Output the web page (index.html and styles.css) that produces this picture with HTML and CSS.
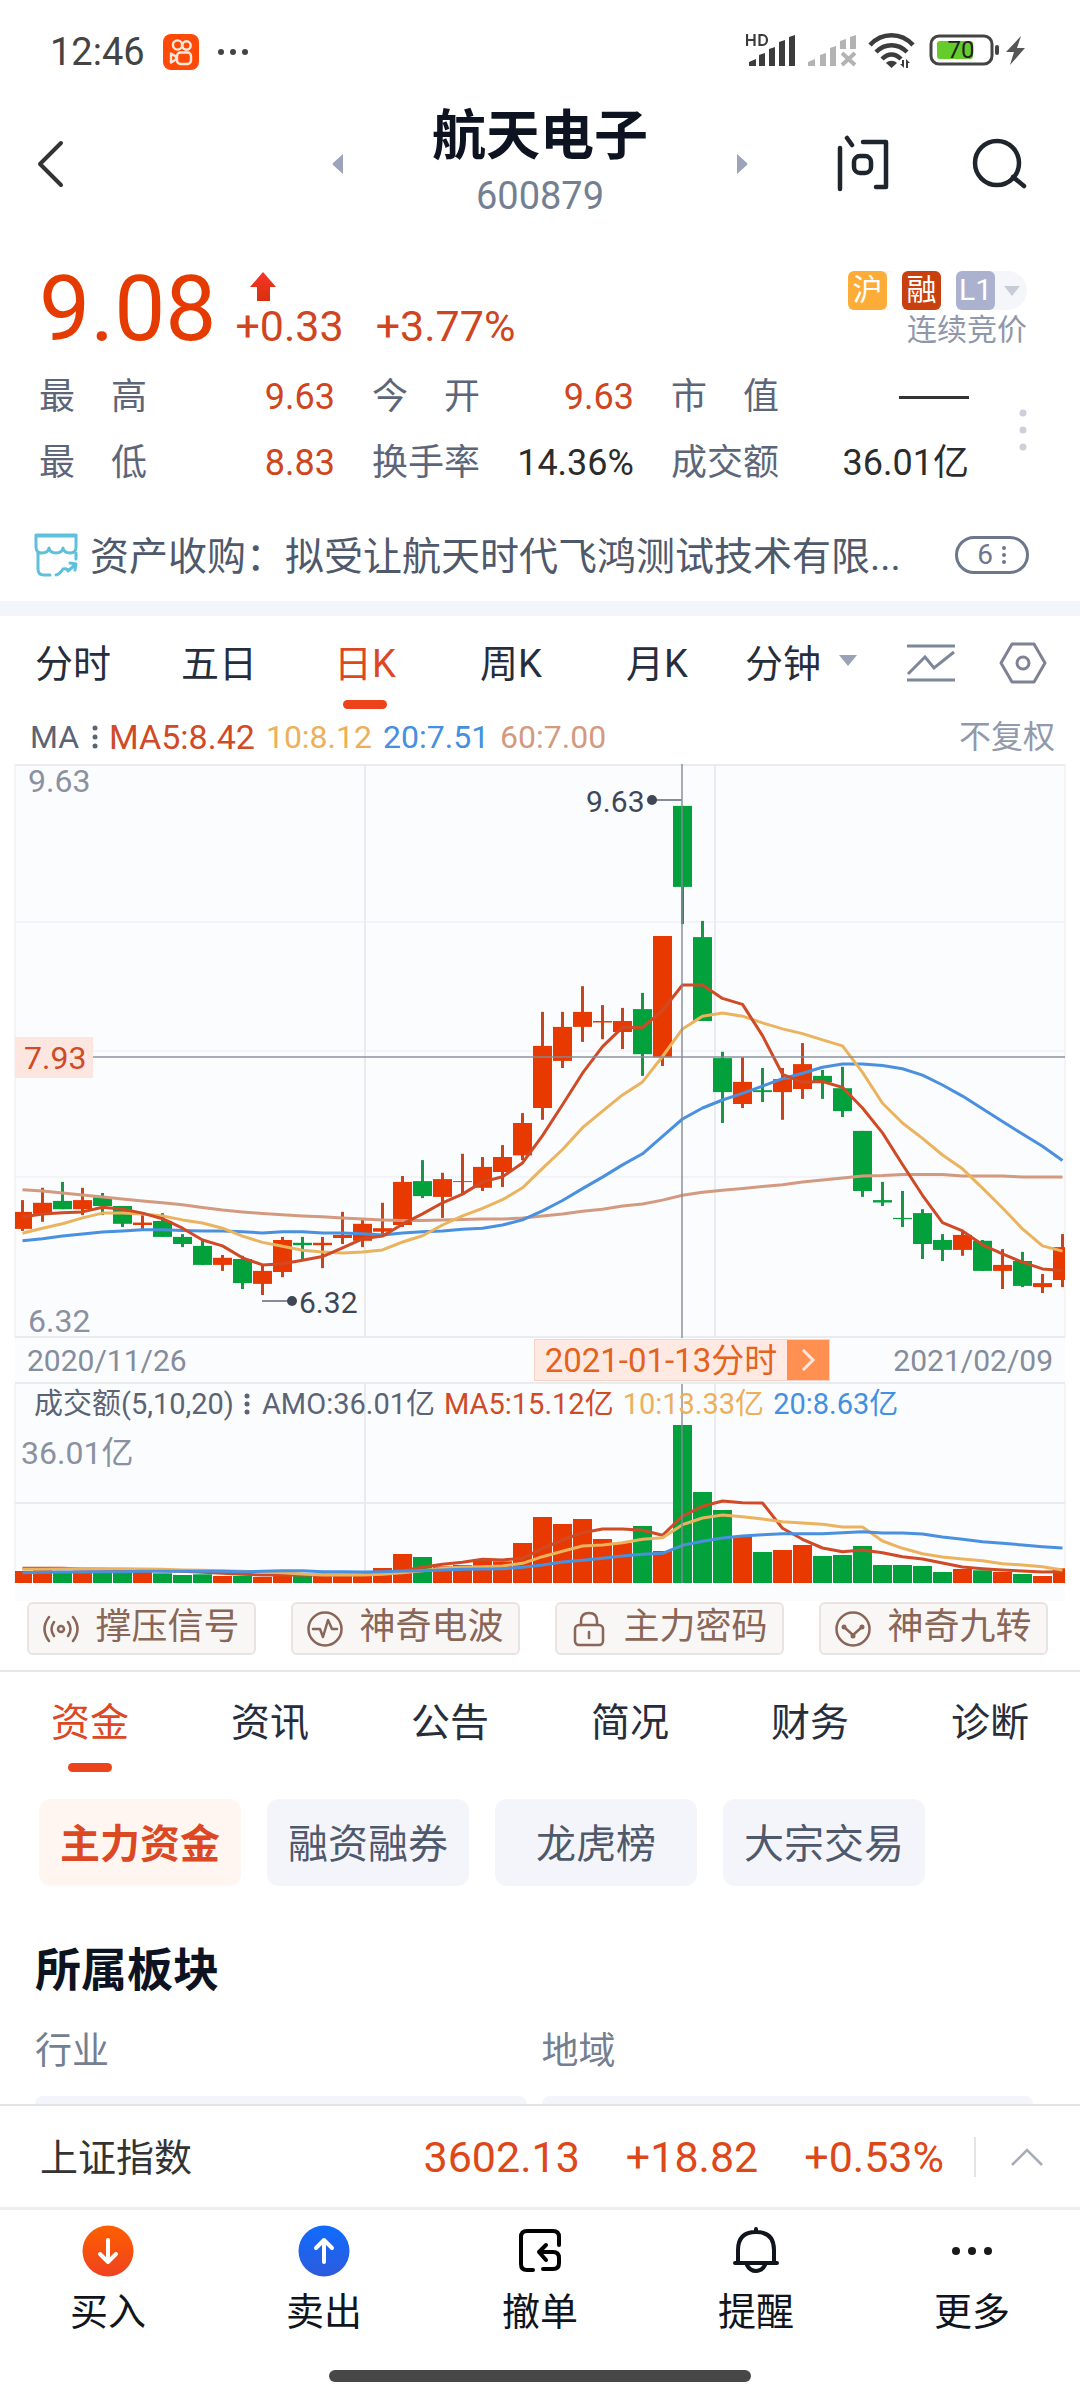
FILE: index.html
```html
<!DOCTYPE html>
<html lang="zh-CN">
<head>
<meta charset="utf-8">
<meta name="viewport" content="width=device-width, initial-scale=1">
<title>航天电子 600879</title>
<link rel="stylesheet" href="styles.css">
</head>
<body>
<div class="app">
  <div class="status">
    <span class="clock">12:46</span>
    <svg class="ks" viewBox="0 0 36 36"><rect width="36" height="36" rx="8" fill="#ff4906"/><g fill="none" stroke="#ffe9dc" stroke-width="2.4"><circle cx="14.500" cy="11" r="4.600"/><circle cx="23.500" cy="11.500" r="4.200"/><rect x="14" y="18.500" width="14" height="11.500" rx="3.500"/><path d="M8 19.500v9l5-3v-3z" stroke-linejoin="round"/></g></svg>
    <svg class="more" viewBox="0 0 32 8" fill="#444"><circle cx="4" cy="4" r="3"/><circle cx="16" cy="4" r="3"/><circle cx="28" cy="4" r="3"/></svg>
    <svg class="system" viewBox="0 0 284 40">
      <g fill="none" stroke="#3c3c3c" stroke-width="2.200"><path d="M1 2v12M8.500 2v12M1 8h7.500M13.500 3v10h3c6 0 6-10 0-10z"/></g>
      <g fill="#3c3c3c"><path d="M3 34v-4l7-3v7zM13 34V23l6-2v13zM23 34V17l6-2v19zM33 34V10l6-2v26zM43 34V5l6-2v31z"/></g>
      <g fill="#b3b3b3"><path d="M62 34v-4l7-3v7zM74 34V23l6-2v13zM84 34V16l6-2v20zM94 17v-8l6-2v10zM104 17V5l6-2v14z"/><path d="M96 21l13 12M109 21l-13 12" stroke="#b3b3b3" stroke-width="4"/></g>
      <g fill="none" stroke="#3c3c3c" stroke-width="4.500"><path d="M124 13c12-13 31-13 43 0M130 20c9-9 22-9 31 0M136 27c6-6 13-6 19 0"/></g>
      <path d="M140 31c3-3 8-3 11 0l-5.500 5zM156 28h2v8l-4-4h2zM160 36v-9l4 4h-2v5z" fill="#3c3c3c"/>
      <rect x="185" y="4" width="61" height="28" rx="8" fill="none" stroke="#444" stroke-width="3"/>
      <rect x="191" y="9" width="36" height="18" rx="3" fill="#64cc2b"/>
      <text x="215" y="26" text-anchor="middle" font-size="24" fill="#222">70</text>
      <rect x="249" y="13" width="4" height="10" rx="2" fill="#444"/>
      <path d="M275 4l-15 16h8l-4 13 15-17h-8z" fill="#555"/>
    </svg>
  </div>

  <header class="header">
    <button class="icon-btn back" aria-label="返回"><svg viewBox="0 0 28 48" width="28" height="48"><path d="M25 3L4 24l21 21" fill="none" stroke="#333" stroke-width="4" stroke-linecap="round" stroke-linejoin="round"/></svg></button>
    <div class="switcher">
      <button class="icon-btn" aria-label="上一只"><svg viewBox="0 0 12 20" width="12" height="20"><path d="M11 0v20L1 11q-1-1 0-2z" fill="#9ba4b8"/></svg></button>
      <div class="name"><h1>航天电子</h1><p>600879</p></div>
      <button class="icon-btn" aria-label="下一只"><svg viewBox="0 0 12 20" width="12" height="20"><path d="M1 0v20l10-9q1-1 0-2z" fill="#9ba4b8"/></svg></button>
    </div>
    <div class="tools">
      <button class="icon-btn" aria-label="问"><svg viewBox="0 0 54 58" width="54" height="58" fill="none" stroke="#1f252d" stroke-width="4.500" stroke-linecap="round" stroke-linejoin="round"><path d="M4 13v41M11 3l5 7M27 7h23v45H40"/><rect x="18" y="21" width="17" height="17" rx="6"/></svg></button>
      <button class="icon-btn" aria-label="搜索"><svg viewBox="0 0 56 52" width="56" height="52" fill="none" stroke="#1f252d" stroke-width="4.500" stroke-linecap="round"><circle cx="25" cy="25" r="22"/><path d="M41 39l11 9"/></svg></button>
    </div>
  </header>

  <main class="content">
    <section class="quote">
      <div class="quote-top">
        <strong class="price">9.08</strong>
        <div class="change">
          <svg viewBox="0 0 28 30" width="28" height="30"><defs><linearGradient id="up" x2="0" y2="1"><stop stop-color="#f7342b"/><stop offset="1" stop-color="#d8300c"/></linearGradient></defs><path d="M14 0L27 15h-6v14H8V15H1z" fill="url(#up)"/></svg>
          <p><span>+0.33</span><span>+3.77%</span></p>
        </div>
        <div class="marks">
          <button class="badges" aria-label="标签"><span class="badge hu">沪</span><span class="badge rong">融</span><span class="badge level">L1</span><svg viewBox="0 0 16 10" width="16" height="10"><path d="M0 0h16L8 10z" fill="#c8ccd6"/></svg></button>
          <span class="session">连续竞价</span>
        </div>
      </div>
      <div class="quote-grid">
        <dl>
          <div><dt>最 高</dt><dd class="red">9.63</dd></div>
          <div><dt>今 开</dt><dd class="red">9.63</dd></div>
          <div><dt>市 值</dt><dd><span class="dash"></span></dd></div>
          <div><dt>最 低</dt><dd class="red">8.83</dd></div>
          <div><dt>换手率</dt><dd>14.36%</dd></div>
          <div><dt>成交额</dt><dd>36.01亿</dd></div>
        </dl>
        <button class="icon-btn" aria-label="展开"><svg viewBox="0 0 8 42" width="8" height="42" fill="#ccd0db"><circle cx="4" cy="4" r="3.500"/><circle cx="4" cy="21" r="3.500"/><circle cx="4" cy="38" r="3.500"/></svg></button>
      </div>
    </section>

    <a class="notice" href="#">
      <svg viewBox="0 0 44 44" width="44" height="44" fill="none" stroke="#5fc0dc" stroke-width="3" stroke-linejoin="round" stroke-linecap="round"><path d="M2 2h40v12q0 6-6 6-6 0-7-5-1 5-7 5t-7-5q-1 5-7 5-6 0-6-6zM2 3h40M4 20v16q0 6 6 6h6M42 20v6M22 42q4-1 7-6 4-1 5 2l8-7M36 30l6 1-1 6"/></svg>
      <span class="notice-text">资产收购：拟受让航天时代飞鸿测试技术有限...</span>
      <span class="count">6<svg viewBox="0 0 6 20" width="6" height="20" fill="#6c778c"><circle cx="3" cy="3" r="2"/><circle cx="3" cy="10" r="2"/><circle cx="3" cy="17" r="2"/></svg></span>
    </a>

    <section class="kline">
      <nav class="periods">
        <button>分时</button><button>五日</button><button class="active">日K</button><button>周K</button><button>月K</button>
        <button class="minutes">分钟<svg viewBox="0 0 18 11" width="18" height="11"><path d="M0 0h18L9 11z" fill="#9aa2b5"/></svg></button>
        <button class="overlay" aria-label="叠加"><svg viewBox="0 0 50 40" width="50" height="40" fill="none" stroke="#7d879a" stroke-width="3"><path d="M1 3h48M1 37h48M2 31l17-17 9 11L48 9"/></svg></button>
        <button class="settings" aria-label="设置"><svg viewBox="0 0 48 42" width="48" height="42" fill="none" stroke="#7d8294" stroke-width="3" stroke-linejoin="round"><path d="M13 2h22l11 19-11 19H13L2 21z"/><circle cx="24" cy="21" r="6"/></svg></button>
      </nav>
      <div class="ma-row">
        <button class="ma-name">MA<svg viewBox="0 0 6 26" width="6" height="26" fill="#5b6475"><circle cx="3" cy="4" r="2.500"/><circle cx="3" cy="13" r="2.500"/><circle cx="3" cy="22" r="2.500"/></svg></button>
        <span class="c5">MA5:8.42</span><span class="c10">10:8.12</span><span class="c20">20:7.51</span><span class="c60">60:7.00</span>
        <button class="adjust">不复权</button>
      </div>
      <div class="panes">
        <svg id="price-pane" class="pane" viewBox="0 0 1050 574" role="img" aria-label="日K线"></svg>
        <div class="dates">
          <span>2020/11/26</span><span>2021/02/09</span>
          <button class="date-tip"><span>2021-01-13分时</span><i><svg viewBox="0 0 16 24" width="16" height="24"><path d="M3 2l10 10L3 22" fill="none" stroke="#ffe9dd" stroke-width="3"/></svg></i></button>
        </div>
        <div class="volume">
          <svg id="volume-pane" class="pane" viewBox="0 0 1050 217" role="img" aria-label="成交额"></svg>
          <div class="volume-legend">
            <button>成交额(5,10,20)<svg viewBox="0 0 6 22" width="6" height="22" fill="#5b6475"><circle cx="3" cy="3" r="2.500"/><circle cx="3" cy="11" r="2.500"/><circle cx="3" cy="19" r="2.500"/></svg></button>
            <span>AMO:36.01亿</span><span class="c5">MA5:15.12亿</span><span class="c10">10:13.33亿</span><span class="c20">20:8.63亿</span>
          </div>
        </div>
      </div>
      <div class="features">
        <button><svg viewBox="0 0 36 36" fill="none" stroke="#8a6657" stroke-width="2.500" stroke-linecap="round"><circle cx="18" cy="18" r="3"/><path d="M11 11q-5 7 0 14M25 11q5 7 0 14M6 6q-9 12 0 24M30 6q9 12 0 24"/></svg><span>撑压信号</span></button>
        <button><svg viewBox="0 0 36 36" fill="none" stroke="#8a6657" stroke-width="2.500" stroke-linejoin="round" stroke-linecap="round"><circle cx="18" cy="18" r="16.500"/><path d="M6 18h7l3 8 5-17 4 9h5"/></svg><span>神奇电波</span></button>
        <button><svg viewBox="0 0 36 36" fill="none" stroke="#8a6657" stroke-width="2.500" stroke-linecap="round"><rect x="4" y="14" width="28" height="20" rx="4"/><path d="M10 14v-4q0-8 8-8t8 8v4M18 21v6"/></svg><span>主力密码</span></button>
        <button><svg viewBox="0 0 36 36" fill="none" stroke="#8a6657" stroke-width="2.500" stroke-linecap="round"><circle cx="18" cy="18" r="16.500"/><path d="M9 16l9 8 9-8"/><g fill="#8a6657" stroke="none"><circle cx="9" cy="16" r="2.500"/><circle cx="18" cy="25" r="2.500"/><circle cx="27" cy="16" r="2.500"/></g></svg><span>神奇九转</span></button>
      </div>
    </section>

    <nav class="sections">
      <button class="active">资金</button><button>资讯</button><button>公告</button><button>简况</button><button>财务</button><button>诊断</button>
    </nav>
    <div class="chips">
      <button class="on">主力资金</button><button>融资融券</button><button>龙虎榜</button><button>大宗交易</button>
    </div>
    <section class="boards">
      <h2>所属板块</h2>
      <div class="board-grid">
        <div><h3>行业</h3><div class="card"></div></div>
        <div><h3>地域</h3><div class="card"></div></div>
      </div>
    </section>
  </main>

  <button class="index-bar">
    <span class="index-name">上证指数</span>
    <span class="index-values"><span>3602.13</span><span>+18.82</span><span>+0.53%</span></span>
    <span class="rule"></span>
    <svg viewBox="0 0 34 20" width="34" height="20"><path d="M2 18L17 3l15 15" fill="none" stroke="#a6acb8" stroke-width="2.500"/></svg>
  </button>
  <nav class="actions">
    <button><svg viewBox="0 0 52 52"><defs><linearGradient id="buy" x2="0" y2="1"><stop stop-color="#ff5f00"/><stop offset="1" stop-color="#ee4220"/></linearGradient></defs><circle cx="26" cy="26" r="25.500" fill="url(#buy)"/><path d="M26 15v22M18 29l8 8 8-8" fill="none" stroke="#fff" stroke-width="4" stroke-linecap="round" stroke-linejoin="round"/></svg>买入</button>
    <button><svg viewBox="0 0 52 52"><defs><linearGradient id="sell" x2="0" y2="1"><stop stop-color="#0f6bff"/><stop offset="1" stop-color="#2d5bdc"/></linearGradient></defs><circle cx="26" cy="26" r="25.500" fill="url(#sell)"/><path d="M26 37V15M18 23l8-8 8 8" fill="none" stroke="#fff" stroke-width="4" stroke-linecap="round" stroke-linejoin="round"/></svg>卖出</button>
    <button><svg viewBox="0 0 52 52" fill="none" stroke="#000" stroke-width="4" stroke-linecap="round" stroke-linejoin="round"><path d="M45 20v-8q0-6-6-6H13q-6 0-6 6v27q0 6 6 6h6M29 44h10q6 0 6-6v-5q0-6-6-6H25M32 20l-7 7 7 8"/></svg>撤单</button>
    <button><svg viewBox="0 0 52 52" fill="none" stroke="#10151d" stroke-width="4" stroke-linecap="round" stroke-linejoin="round"><path d="M8 38V25q0-18 18-18t18 18v13M5 38h42M17 40q3 6 9 6t9-6M26 4v3"/></svg>提醒</button>
    <button><svg viewBox="0 0 52 52" fill="#1a1a1a"><circle cx="10" cy="26" r="4"/><circle cx="26" cy="26" r="4"/><circle cx="42" cy="26" r="4"/></svg>更多</button>
  </nav>
  <div class="home"><span></span></div>
</div>
<script src="chart.js"></script>
</body>
</html>
```

FILE: chart.js
```js
// Each row: direction, high, body top, body bottom, low, turnover top.
// Price levels are ticks measured down the price pane, turnover levels ticks down the lower pane.
const days = [
  ['r',1113,1143,1186,1191,723],['r',1082,1120,1148,1168,720],['g',1067,1115,1136,1136,725],['r',1082,1113,1136,1151,722],
  ['g',1095,1106,1128,1151,724],['g',1128,1128,1173,1181,726],['r',1150,1170,1176,1186,722],['g',1146,1166,1206,1206,730],
  ['g',1199,1206,1224,1232,735],['g',1211,1229,1277,1277,733],['r',1252,1259,1277,1292,738],['g',1254,1262,1323,1338,738],
  ['r',1277,1292,1325,1353,741],['r',1206,1214,1295,1308,737],['g',1206,1221,1227,1262,738],['r',1206,1221,1227,1285,738],
  ['r',1143,1201,1209,1224,738],['r',1163,1173,1216,1232,735],['r',1120,1184,1193,1201,714],['r',1052,1067,1176,1181,672],
  ['g',1012,1065,1103,1108,681],['r',1044,1060,1105,1158,709],['r',996,1065,1067,1098,705],['r',1004,1029,1082,1090,687],
  ['r',974,1004,1042,1080,694],['r',893,918,1000,1012,639],['r',637,723,880,910,561],['r',637,675,761,779,582],
  ['r',572,637,675,713,567],['r',620,660,664,706,627],['r',627,660,688,731,639],['g',589,630,744,799,588],
  ['r',445,445,752,774,663],['g',116,116,321,415,285],['g',407,448,660,660,486],['g',738,754,840,918,540],
  ['r',752,814,870,880,621],['g',779,835,840,865,666],['r',779,807,840,910,660],['r',716,769,832,857,645],
  ['g',784,799,815,857,678],['g',776,830,888,903,675],['g',938,938,1090,1105,648],['g',1067,1113,1119,1128,705],
  ['g',1090,1158,1161,1181,705],['g',1136,1146,1224,1262,708],['g',1199,1214,1239,1267,726],['r',1193,1201,1239,1254,717],
  ['g',1214,1216,1292,1292,721],['r',1237,1277,1292,1338,726],['g',1244,1267,1330,1333,732],['r',1300,1323,1333,1348,738],
  ['r',1199,1232,1315,1333,715]
];
const priceMa = {
  c60: [1087,1090,1095,1100,1105,1110,1115,1120,1125,1132,1138,1143,1147,1150,1153,1155,1158,1161,1163,1165,1165,1163,1162,1161,1161,1158,1153,1148,1141,1136,1128,1123,1113,1101,1093,1088,1084,1079,1074,1067,1062,1057,1052,1051,1048,1048,1048,1052,1052,1052,1055,1055,1055],
  c20: [1216,1211,1204,1199,1194,1191,1188,1188,1190,1191,1191,1193,1196,1193,1193,1196,1196,1198,1201,1196,1193,1191,1187,1184,1176,1163,1140,1114,1084,1055,1024,996,952,908,880,860,843,825,806,792,777,769,769,773,781,797,822,850,882,914,946,977,1013],
  c10: [1197,1184,1173,1158,1146,1146,1148,1153,1163,1171,1184,1204,1220,1230,1240,1244,1247,1244,1239,1219,1203,1176,1153,1134,1112,1082,1033,985,930,888,847,814,750,680,648,640,648,665,680,692,708,723,790,868,918,957,999,1034,1083,1133,1186,1229,1242],
  c5: [1156,1148,1145,1143,1131,1136,1146,1160,1184,1214,1229,1259,1277,1274,1265,1256,1234,1211,1204,1174,1148,1120,1098,1067,1054,1019,950,872,792,725,676,677,633,569,569,603,618,697,795,815,813,828,880,943,1023,1101,1170,1191,1226,1249,1270,1287,1291]
};
const volumeMa = {
  c5: [715,715,715,717,718,719,720,722,724,727,730,733,735,735,735,735,735,734,730,722,712,703,697,688,690,685,655,630,608,597,597,601,616,558,529,513,518,519,595,628,654,665,660,668,680,687,699,711,716,720,723,726,725],
  c10: [718,718,717,716,716,716,717,718,720,721,722,724,726,728,732,735,735,735,733,728,722,715,712,710,708,700,680,664,648,645,638,628,623,584,564,555,560,567,575,579,583,591,591,633,655,671,681,687,692,701,705,710,720],
  c20: [728,727,726,726,725,725,724,724,724,724,724,725,724,722,722,725,725,726,725,723,722,720,718,717,716,712,705,696,691,685,678,673,670,646,634,624,618,614,611,611,611,608,605,609,609,612,621,628,635,640,645,650,654]
};

const priceY = t => +(t * 0.3954 - 4).toFixed(1);
const volumeY = t => +(t / 3 - 54).toFixed(1);
const dayX = i => 7.5 + 20 * i;
const rect = (cls, x, y, w, h) => `<rect class="${cls}" x="${x}" y="${y}" width="${w}" height="${h}"/>`;
const line = (cls, x1, y1, x2, y2) => `<line class="${cls}" x1="${x1}" y1="${y1}" x2="${x2}" y2="${y2}"/>`;
// Bodies and bars stop at the pane's edges.
const bar = (cls, i, y, h) => {
  const left = Math.max(0, dayX(i) - 9.5);
  return rect(cls, left, y, Math.min(1050, dayX(i) + 9.5) - left, h);
};
const average = (cls, values, scale) =>
  `<polyline class="ma ${cls}" points="${values.map((v, i) => dayX(i) + ',' + scale(v)).join(' ')}"/>`;

let price = '';
[1, 573].forEach(y => { price += line('grid edge', 0, y, 1050, y); });
[158, 287, 413].forEach(y => { price += line('grid', 0, y, 1050, y); });
[0, 1050].forEach(x => { price += line('grid', x, 0, x, 573); });
[350, 700].forEach(x => { price += line('grid edge', x, 0, x, 573); });
price += '<text class="axis" x="13" y="28">9.63</text><text class="axis" x="13" y="568">6.32</text>';
days.forEach(([dir, high, top, bottom, low], i) => {
  price += rect('wick ' + dir, dayX(i) - 1.5, priceY(high), 3, Math.max(1, priceY(low) - priceY(high)));
  price += bar(dir, i, priceY(top), Math.max(1, priceY(bottom) - priceY(top)));
});
for (const cls in priceMa) price += average(cls, priceMa[cls], priceY);
price += line('cross', 78, 293, 1050, 293) + line('cross', 667, 0, 667, 574);
price += rect('level', 0, 273, 78, 41) + '<text class="level-text" x="9" y="305">7.93</text>';
price += line('pointer', 247, 537, 277, 537) + '<circle class="dot" cx="277" cy="537" r="5"/><text class="note" x="284" y="549">6.32</text>';
price += line('pointer', 637, 36, 667, 36) + '<circle class="dot" cx="637" cy="36" r="5"/><text class="note" x="571" y="48">9.63</text>';
document.getElementById('price-pane').innerHTML = price;

let volume = line('grid edge', 0, 119, 1050, 119);
[0, 1050].forEach(x => { volume += line('grid', x, 0, x, 199); });
[350, 700].forEach(x => { volume += line('grid edge', x, 0, x, 199); });
volume += '<text class="axis" x="6" y="80">36.01亿</text>';
days.forEach((day, i) => { volume += bar(day[0], i, volumeY(day[5]), 199 - volumeY(day[5])); });
for (const cls in volumeMa) volume += average(cls, volumeMa[cls], volumeY);
volume += line('cross', 667, 0, 667, 199);
document.getElementById('volume-pane').innerHTML = volume;
```

FILE: styles.css
```css
* { box-sizing: border-box; }
body, h1, h2, h3, p, dl, dd { margin: 0; }
body {
  font-family: Roboto, "Noto Sans CJK SC", sans-serif;
  color: #262e3d;
  background: #fff;
}
button {
  padding: 0;
  border: 0;
  background: none;
  font: inherit;
  color: inherit;
}
svg { display: block; flex: none; }
.app {
  display: flex;
  flex-direction: column;
  height: 100vh;
  overflow: hidden;
}

/* status bar */
.status {
  display: flex;
  align-items: center;
  flex: none;
  height: 104px;
  padding: 0 50px;
}
.clock { font-size: 38px; color: #444; }
.ks { width: 36px; height: 36px; margin-left: 18px; }
.more { width: 32px; height: 8px; margin-left: 18px; }
.system { width: 284px; height: 40px; margin-left: auto; }

/* header */
.header {
  display: grid;
  grid-template-columns: 1fr 416px 1fr;
  align-items: center;
  flex: none;
  height: 120px;
  padding: 0 36px;
}
.back { justify-self: start; }
.icon-btn { display: flex; }
.switcher { display: flex; justify-content: space-between; align-items: center; }
.name { text-align: center; }
.name h1 { font-size: 54px; line-height: 64px; font-weight: 700; color: #0d1320; }
.name p { font-size: 38px; line-height: 54px; color: #757f92; }
.tools { display: flex; justify-content: flex-end; align-items: center; gap: 82px; padding-right: 16px; }

/* quote */
.content { flex: 1; min-height: 0; overflow: hidden; }
.quote { padding: 36px 53px 0 39px; }
.quote-top { display: flex; height: 104px; }
.price { font-size: 91px; line-height: 98px; font-weight: 400; color: #e63b00; }
.change { margin-left: 19px; padding-top: 12px; }
.change svg { margin-left: 14px; }
.change p { display: flex; gap: 32px; font-size: 43px; line-height: 48px; color: #cf4520; }
.marks { display: flex; flex-direction: column; align-items: flex-end; margin-left: auto; padding-top: 11px; }
.badges {
  display: flex;
  align-items: center;
  gap: 15px;
  height: 39px;
  padding-right: 7px;
  background: #f5f6fa;
  border-radius: 8px 20px 20px 8px;
}
.badge {
  width: 39px;
  height: 39px;
  font-size: 30px;
  line-height: 38px;
  text-align: center;
  color: #fff;
  border-radius: 6px;
}
.badge + .badge { box-shadow: -15px 0 0 #fff; }
.badges svg { margin-left: -6px; }
.hu { background: #fdac38; }
.rong { background: #c9400f; }
.level { background: #aab2d0; }
.session { font-size: 30px; line-height: 40px; color: #8f97aa; }
.quote-grid { display: flex; align-items: center; gap: 50px; }
.quote-grid dl {
  display: grid;
  grid-template-columns: 295fr 261fr 297fr;
  column-gap: 37px;
  flex: 1;
}
.quote-grid dl div { display: flex; justify-content: space-between; font-size: 36px; line-height: 66px; }
.quote-grid dt { width: 108px; text-align-last: justify; color: #5d6678; }
.quote-grid dd { display: flex; align-items: center; color: #2c2c2c; }
.quote-grid .red { color: #cf4520; }
.dash { width: 70px; height: 3px; background: #333; }

.notice {
  display: flex;
  align-items: center;
  height: 93px;
  margin-top: 12px;
  padding: 0 51px 0 34px;
  text-decoration: none;
  color: #4f596c;
}
.notice-text {
  flex: 1;
  min-width: 0;
  padding: 0 10px 3px 12px;
  font-size: 39px;
  white-space: nowrap;
}
.count {
  display: flex;
  align-items: center;
  justify-content: center;
  gap: 8px;
  width: 74px;
  height: 38px;
  border: 3px solid #6c778c;
  border-radius: 19px;
  font-size: 28px;
  color: #6c778c;
}

/* chart */
.kline { border-top: 15px solid #f4f5fa; }
.periods { display: flex; height: 94px; padding-right: 24px; font-size: 38px; }
.periods button { position: relative; display: flex; align-items: center; justify-content: center; flex: 146; padding-bottom: 6px; }
.periods .minutes { flex: 142; gap: 18px; }
.periods .overlay { flex: 118; padding-bottom: 0; }
.periods .settings { flex: 66; padding-bottom: 0; }
.periods .active, .sections .active { color: #dc4824; }
.periods .active::after, .sections .active::after {
  content: "";
  position: absolute;
  bottom: 1px;
  left: 50%;
  width: 44px;
  height: 9px;
  margin-left: -22px;
  border-radius: 5px;
  background: #ec431c;
}
.ma-row { display: flex; align-items: center; gap: 11px; height: 54px; padding: 0 25px 0 30px; font-size: 32px; line-height: 54px; }
.ma-name { display: flex; align-items: center; gap: 13px; color: #5b6475; }
.adjust { margin-left: auto; color: #9299aa; }
span.c5 { color: #d04a26; }
span.c10 { color: #ecb05a; }
span.c20 { color: #438fe0; }
span.c60 { color: #d49a80; }
.ma-row .c5 { font-size: 34px; }
.panes { margin: 0 15px; background: #fbfcfe; }
.pane { width: 100%; height: auto; overflow: visible; }
.grid { stroke: #e9ebef; stroke-width: 1; }
.edge { stroke-width: 2; }
.r { fill: #e83a00; }
.g { fill: #02a13c; }
.wick.r { fill: #c4461c; }
.wick.g { fill: #1b9448; }
.ma { fill: none; stroke-width: 3; stroke-linejoin: round; }
.ma.c5 { stroke: #d04a26; }
.ma.c10 { stroke: #ecb35f; }
.ma.c20 { stroke: #4a90e0; }
.ma.c60 { stroke: #d49a80; }
.cross { stroke: #858b98; stroke-width: 2; opacity: .7; }
.level { fill: #fde5e0; }
.level-text { font-size: 32px; fill: #d04a26; }
.axis { font-size: 32px; fill: #8a91a0; }
.note { font-size: 30px; fill: #3f4757; }
.pointer { stroke: #858b98; stroke-width: 2; }
.dot { fill: #3f4757; }
.dates {
  position: relative;
  display: flex;
  justify-content: space-between;
  height: 46px;
  padding: 0 12px;
  border-bottom: 2px solid #e9ebef;
  font-size: 30px;
  line-height: 46px;
  color: #858c9b;
}
.date-tip {
  position: absolute;
  top: 1px;
  left: 49.4%;
  display: flex;
  height: 42px;
  border: 1px solid #fbd3c5;
  background: #ffe9e3;
  font-size: 33px;
  line-height: 41px;
  color: #e5621a;
}
.date-tip span { padding: 0 10px; }
.date-tip i { display: flex; align-items: center; justify-content: center; width: 42px; background: #ff9052; }
.volume { display: grid; }
.volume > * { grid-area: 1 / 1; }
.volume-legend { display: flex; align-items: center; align-self: start; gap: 9px; padding-left: 19px; font-size: 29px; line-height: 40px; color: #5b6475; }
.volume-legend button { display: flex; align-items: center; gap: 10px; margin-right: 3px; }
.features { display: grid; grid-template-columns: repeat(4, 1fr); gap: 35px; padding: 1px 32px 15px 27px; }
.features button {
  display: flex;
  align-items: center;
  justify-content: center;
  gap: 16px;
  height: 53px;
  border: 2px solid #ebe3e2;
  border-radius: 6px;
  background: #f9f6f6;
  font-size: 36px;
  line-height: 46px;
  color: #8a6657;
}
.features span { padding-bottom: 4px; }
.features svg { width: 36px; height: 36px; }

/* detail sections */
.sections { display: grid; grid-template-columns: repeat(6, 1fr); height: 103px; border-top: 2px solid #e6e7ea; font-size: 39px; }
.sections button { position: relative; padding-bottom: 8px; }
.chips { display: flex; gap: 26px; padding: 26px 39px 0; }
.chips button { width: 202px; height: 87px; padding-bottom: 3px; border-radius: 12px; background: #f4f5fa; font-size: 40px; color: #4f596c; }
.chips .on { background: #fff6f1; font-weight: 700; color: #dc4824; }
.boards { padding: 52px 47px 0 35px; }
.boards h2 { font-size: 46px; line-height: 64px; color: #0d1320; }
.boards h3 { margin-top: 20px; font-size: 37px; line-height: 60px; font-weight: 400; color: #757f92; }
.board-grid { display: grid; grid-template-columns: 1fr 1fr; gap: 15px; }
.card { height: 110px; margin-top: 14px; border-radius: 8px; background: #f4f5fa; }

/* bottom bars */
.index-bar {
  display: flex;
  align-items: center;
  flex: none;
  height: 103px;
  padding: 0 36px 0 40px;
  border-top: 2px solid #e3e4e8;
  background: #fff;
  font-size: 38px;
  color: #333;
}
.index-name { padding-bottom: 4px; }
.index-values { display: flex; gap: 46px; margin-left: auto; font-size: 43px; color: #dd4818; }
.rule { width: 2px; height: 40px; margin: 0 34px 0 30px; background: #e3e4e8; }
.actions { display: grid; grid-template-columns: repeat(5, 1fr); flex: none; height: 134px; border-top: 3px solid #f0f0f0; background: #fff; }
.actions button { display: flex; flex-direction: column; align-items: center; gap: 2px; padding-top: 15px; font-size: 38px; line-height: 66px; color: #10151d; }
.actions svg { width: 52px; height: 52px; }
.home { display: flex; justify-content: center; flex: none; height: 59px; padding-top: 29px; background: #fff; }
.home span { width: 39%; height: 12px; border-radius: 6px; background: #474747; }
```
